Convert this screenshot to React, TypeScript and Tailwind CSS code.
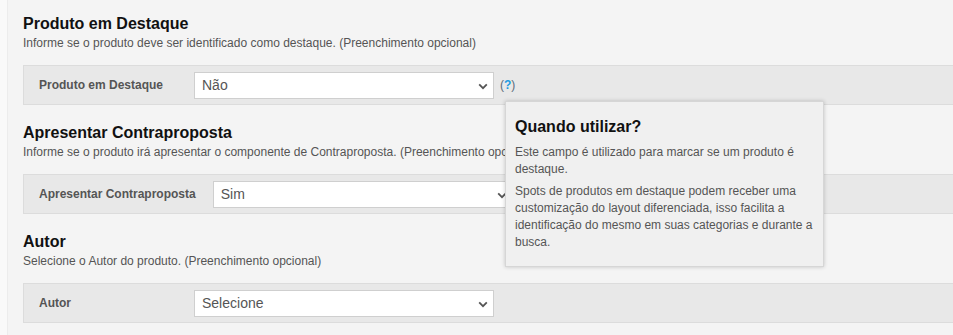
import React from 'react';

interface FieldProps {
  title: string;
  hint: string;
  label: string;
  value: string;
  help?: boolean;
  first?: boolean;
}

const Chevron: React.FC = () => (
  <svg width="10" height="7" viewBox="0 0 10 7" className="pointer-events-none absolute right-[5px] top-[10px]">
    <path d="M1.2 1.4 L5 5.2 L8.8 1.4" fill="none" stroke="#555" strokeWidth="1.8" />
  </svg>
);

const Field: React.FC<FieldProps> = ({ title, hint, label, value, help, first }) => (
  <section className={first ? '' : 'mt-[18px]'}>
    <h2 className="text-[16px] leading-[20px] font-bold text-[#111]">{title}</h2>
    <p className="mt-[1px] text-[12px] leading-[16px] text-[#555]">{hint}</p>
    <div className="mt-[14px] flex h-[40px] items-center border-y border-l border-[#dcdcdc] bg-[#e8e8e8]">
      <div className="min-w-[170px] pl-[15px] pr-[17px] text-[12px] font-bold text-[#555] whitespace-nowrap">{label}</div>
      <div className="relative h-[27px] w-[300px] border border-[#cfcfcf] bg-white">
        <div className="pl-[7px] text-[14px] leading-[25px] text-[#555]">{value}</div>
        <Chevron />
      </div>
      {help && (
        <span className="ml-[6px] text-[12px] text-[#5b6b7b]">
          (<span className="font-bold text-[#1f9be0]">?</span>)
        </span>
      )}
    </div>
  </section>
);

export default function App() {
  return (
    <div className="relative h-[335px] w-[953px] overflow-hidden bg-[#f9f9f9] pl-[7px] font-['Liberation_Sans',Arial,sans-serif]">
      <div className="h-full border-l border-[#ececec] bg-[#f4f4f4] pl-[15px] pt-[14px]">
        <Field
          first
          title="Produto em Destaque"
          hint="Informe se o produto deve ser identificado como destaque. (Preenchimento opcional)"
          label="Produto em Destaque"
          value="Não"
          help
        />
        <Field
          title="Apresentar Contraproposta"
          hint="Informe se o produto irá apresentar o componente de Contraproposta. (Preenchimento opcional)"
          label="Apresentar Contraproposta"
          value="Sim"
        />
        <Field
          title="Autor"
          hint="Selecione o Autor do produto. (Preenchimento opcional)"
          label="Autor"
          value="Selecione"
        />
      </div>

      <div className="absolute left-[505px] top-[101px] w-[319px] h-[166px] border border-[#d6d6d6] bg-[#f0f0f0] px-[9px] pt-[15px] shadow-[0_0_4px_rgba(0,0,0,0.2)]">
        <h3 className="text-[16px] leading-[20px] font-bold text-[#111]">Quando utilizar?</h3>
        <p className="mt-[7px] text-[12px] leading-[17px] text-[#555]">
          Este campo é utilizado para marcar se um produto é destaque.
        </p>
        <p className="mt-[5px] text-[12px] leading-[17px] text-[#555]">
          Spots de produtos em destaque podem receber uma customização do layout diferenciada, isso facilita a identificação do mesmo em suas categorias e durante a busca.
        </p>
      </div>
    </div>
  );
}
